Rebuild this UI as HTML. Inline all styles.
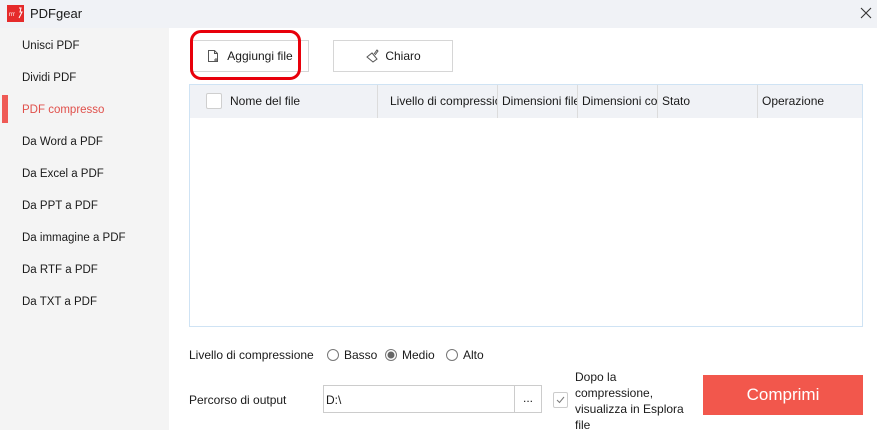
<!DOCTYPE html>
<html><head><meta charset="utf-8"><style>
*{margin:0;padding:0;box-sizing:border-box}
body{width:877px;height:430px;overflow:hidden;background:#fff;font-family:"Liberation Sans",sans-serif;font-size:12px;color:#1a1a1a;position:relative}
.abs{position:absolute}
.title{left:0;top:0;width:877px;height:28px;background:#f0f2f6}
.side{left:0;top:28px;width:169px;height:402px;background:#f4f4f4}
.item{position:absolute;left:22px;font-size:11.5px;white-space:nowrap}
.btn{border:1px solid #d6d6d6;background:#fff;height:32px;top:40px;display:flex;align-items:center;justify-content:center;font-size:12px}
.th{position:absolute;top:0;height:33px;line-height:33px;font-size:12px;white-space:nowrap;overflow:hidden;border-right:1px solid #dcdcdc;padding-left:4px}
</style></head><body>
<div class="abs title"></div>
<svg class="abs" style="left:7px;top:5px" width="17" height="17"><rect width="17" height="17" fill="#e52b2b"/><text x="2" y="11" font-size="6" fill="#fff" font-family="Liberation Sans">rrr</text><path d="M12 3l2 0-1 4 2 0-3 6" stroke="#fff" stroke-width="1" fill="none"/></svg>
<div class="abs" style="left:30px;top:6px;font-size:13px">PDFgear</div>
<svg class="abs" style="left:860px;top:7px" width="12" height="12"><path d="M1 1L11 11M11 1L1 11" stroke="#333" stroke-width="1.1"/></svg>
<div class="abs side"></div>
<div class="item" style="top:40px">Unisci PDF</div>
<div class="item" style="top:72px">Dividi PDF</div>
<div class="abs" style="left:2px;top:95px;width:6px;height:28px;background:#ef5a55"></div>
<div class="item" style="top:104px;color:#e0504b">PDF compresso</div>
<div class="item" style="top:136px">Da Word a PDF</div>
<div class="item" style="top:168px">Da Excel a PDF</div>
<div class="item" style="top:200px">Da PPT a PDF</div>
<div class="item" style="top:232px">Da immagine a PDF</div>
<div class="item" style="top:264px">Da RTF a PDF</div>
<div class="item" style="top:296px">Da TXT a PDF</div>

<div class="abs btn" style="left:190px;width:119px">
<svg width="14" height="14" style="margin-right:7px"><path d="M2.5 1.5h6l3 3v8h-9z M8.5 1.5v3h3" stroke="#555" fill="none"/><path d="M10 9v4M8 11h4" stroke="#555"/></svg>Aggiungi file</div>
<div class="abs" style="left:190px;top:30px;width:111px;height:50px;border:3px solid #e8000b;border-radius:11px"></div>
<div class="abs btn" style="left:333px;width:120px">
<svg width="15" height="14" style="margin-right:5px"><path d="M2 8l5-4 5 6-4 3z M9 5l3-4 1 1-3 4" stroke="#555" fill="none"/></svg>Chiaro</div>

<div class="abs" style="left:189px;top:84px;width:674px;height:243px;border:1px solid #cfe3f4">
<div class="abs" style="left:0;top:0;width:672px;height:33px;background:#f0f2f6">
<div class="abs" style="left:16px;top:8px;width:16px;height:16px;border:1px solid #cfcfcf;background:#fff;border-radius:2px"></div>
<div class="th" style="left:36px;width:152px">Nome del file</div>
<div class="th" style="left:188px;width:120px;padding-left:12px">Livello di compressione</div>
<div class="th" style="left:308px;width:80px">Dimensioni file</div>
<div class="th" style="left:388px;width:80px">Dimensioni compresse</div>
<div class="th" style="left:468px;width:100px">Stato</div>
<div class="th" style="left:568px;width:104px;border:none;padding-left:4px">Operazione</div>
</div></div>

<div class="abs" style="left:189px;top:348px">Livello di compressione</div>
<svg class="abs" style="left:326px;top:348px" width="200" height="14"><circle cx="7" cy="7" r="5.5" stroke="#777" fill="#fff"/><circle cx="65" cy="7" r="5.5" stroke="#777" fill="#fff"/><circle cx="65" cy="7" r="3.5" fill="#666"/><circle cx="126" cy="7" r="5.5" stroke="#777" fill="#fff"/></svg>
<div class="abs" style="left:344px;top:348px">Basso</div>
<div class="abs" style="left:402px;top:348px">Medio</div>
<div class="abs" style="left:463px;top:348px">Alto</div>

<div class="abs" style="left:189px;top:393px">Percorso di output</div>
<div class="abs" style="left:323px;top:385px;width:192px;height:28px;border:1px solid #ccc;padding:7px 2px">D:\</div>
<div class="abs" style="left:514px;top:385px;width:28px;height:28px;border:1px solid #ccc;text-align:center;line-height:24px">...</div>
<div class="abs" style="left:553px;top:392px;width:15px;height:16px;border:1px solid #ccc;border-radius:2px"><svg width="13" height="13"><path d="M3 7l2.5 2.5L10 4" stroke="#777" fill="none"/></svg></div>
<div class="abs" style="left:575px;top:369px;line-height:16px;font-size:12px">Dopo la<br>compressione,<br>visualizza in Esplora<br>file</div>
<div class="abs" style="left:703px;top:375px;width:160px;height:40px;background:#f2574c;color:#fff;font-size:17px;text-align:center;line-height:40px">Comprimi</div>
</body></html>
